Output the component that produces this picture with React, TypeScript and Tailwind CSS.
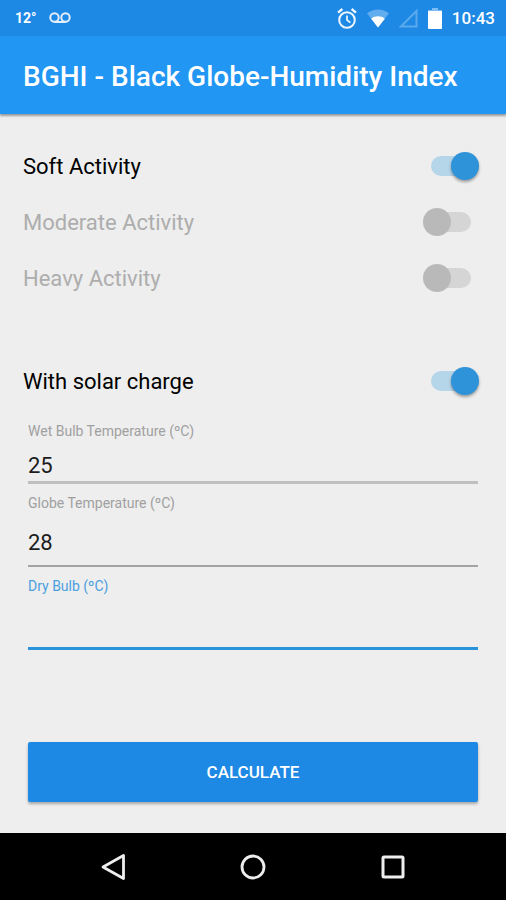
import { useState } from "react";

interface SwitchRowProps {
  id: string;
  label: string;
  checked: boolean;
  onChange: (checked: boolean) => void;
}

function SwitchRow({ id, label, checked, onChange }: SwitchRowProps) {
  return (
    <div className="flex h-14 items-center justify-between pr-[27px] pl-[23px]">
      <label
        htmlFor={id}
        className={`pt-0.5 text-[22px] leading-7 ${checked ? "text-black" : "text-[#adadad]"}`}
      >
        {label}
      </label>
      <input
        id={id}
        type="checkbox"
        role="switch"
        checked={checked}
        onChange={(e) => onChange(e.target.checked)}
        className="relative flex h-7 w-14 shrink-0 cursor-pointer appearance-none items-center px-2 before:h-5 before:w-full before:rounded-full before:bg-[#d5d5d5] after:absolute after:top-0 after:left-0 after:size-7 after:rounded-full after:bg-[#b9b9b9] checked:before:bg-[#b5d5e9] checked:after:right-0 checked:after:left-auto checked:after:bg-[#2e93d9] checked:after:shadow-[0_2px_3px_rgba(0,0,0,0.35)]"
      />
    </div>
  );
}

interface FieldProps {
  id: string;
  label: string;
  value: string;
  onChange: (value: string) => void;
  labelClass: string;
  inputClass: string;
}

function Field({ id, label, value, onChange, labelClass, inputClass }: FieldProps) {
  return (
    <div className="flex flex-col">
      <label htmlFor={id} className={`text-sm leading-5 ${labelClass}`}>
        {label}
      </label>
      <input
        id={id}
        type="text"
        inputMode="decimal"
        value={value}
        onChange={(e) => onChange(e.target.value)}
        className={`w-full bg-transparent text-[22px] text-[#1c1c1c] outline-none ${inputClass}`}
      />
    </div>
  );
}

function StatusBar() {
  return (
    <div className="flex h-9 items-center justify-between bg-[#1e88e5] pr-[11px] pl-[15px] text-white">
      <div className="flex items-center gap-3">
        <span className="text-sm font-bold">12°</span>
        <svg width="22" height="12" viewBox="0 0 22 12" fill="none" stroke="#e3f0fc" strokeWidth="2">
          <circle cx="5.5" cy="5.5" r="4.2" />
          <circle cx="16.5" cy="5.5" r="4.2" />
          <path d="M5.5 10h11" />
        </svg>
      </div>
      <div className="flex items-center gap-[10px]">
        <svg width="20" height="21" viewBox="0 0 20 21" fill="none" stroke="#eef6fd" strokeWidth="2">
          <circle cx="10" cy="12" r="7.8" />
          <path d="M10 7.5V12l3.4 2.6" strokeWidth="1.7" />
          <path d="M1 4.6 5.4 1M19 4.6 14.6 1" strokeWidth="2.4" />
        </svg>
        <svg width="22" height="19" viewBox="0 0 22 19">
          <path d="M0 4.3C6.500-0.800 15.500-0.800 22 4.300L11 18.500Z" fill="#62adee" />
          <path d="M4.200 9.700C8 6.500 14 6.500 17.800 9.700L11 18.500Z" fill="#fff" />
        </svg>
        <svg width="19" height="20" viewBox="0 0 19 20" fill="none" stroke="#5ba9ed" strokeWidth="2">
          <path d="M17.500 3v15.500H2Z" />
        </svg>
        <svg width="14" height="21" viewBox="0 0 14 21">
          <path d="M4 0h6v2h4v2H0V2h4Z" fill="#7dbbf1" />
          <rect y="3" width="14" height="18" rx="1" fill="#fff" />
        </svg>
        <span className="text-[17px] leading-6 font-medium">10:43</span>
      </div>
    </div>
  );
}

function NavBar() {
  return (
    <nav className="flex h-[67px] items-center justify-center bg-black">
      <button type="button" aria-label="Back" className="flex w-[140px] justify-center">
        <svg width="26" height="28" viewBox="0 0 26 28" fill="none" stroke="#eee" strokeWidth="2.8">
          <path d="M23.500 2.500v23L3 14Z" strokeLinejoin="round" />
        </svg>
      </button>
      <button type="button" aria-label="Home" className="flex w-[140px] justify-center">
        <svg width="26" height="26" viewBox="0 0 26 26" fill="none" stroke="#eee" strokeWidth="2.8">
          <circle cx="13" cy="13" r="11" />
        </svg>
      </button>
      <button type="button" aria-label="Recent apps" className="flex w-[140px] justify-center">
        <svg width="24" height="24" viewBox="0 0 24 24" fill="none" stroke="#eee" strokeWidth="3">
          <rect x="2" y="2" width="20" height="20" rx="1" />
        </svg>
      </button>
    </nav>
  );
}

type Activity = "soft" | "moderate" | "heavy";

const ACTIVITIES: { id: Activity; label: string }[] = [
  { id: "soft", label: "Soft Activity" },
  { id: "moderate", label: "Moderate Activity" },
  { id: "heavy", label: "Heavy Activity" },
];

export default function App() {
  const [activity, setActivity] = useState<Activity>("soft");
  const [solar, setSolar] = useState(true);
  const [wetBulb, setWetBulb] = useState("25");
  const [globe, setGlobe] = useState("28");
  const [dryBulb, setDryBulb] = useState("");

  return (
    <div className="flex min-h-screen flex-col bg-[#eeeeee] font-[Roboto,sans-serif]">
      <StatusBar />
      <header className="flex h-[78px] items-center bg-[#2196f3] px-[23px] pt-1 shadow-[0_2px_2px_rgba(0,0,0,0.35)]">
        <h1 className="text-[28px] leading-8 font-medium text-white">
          BGHI - Black Globe-Humidity Index
        </h1>
      </header>

      <main className="flex flex-1 flex-col pt-6">
        {ACTIVITIES.map((item) => (
          <SwitchRow
            key={item.id}
            id={item.id}
            label={item.label}
            checked={activity === item.id}
            onChange={() => setActivity(item.id)}
          />
        ))}

        <div className="mt-[47px]">
          <SwitchRow id="solar" label="With solar charge" checked={solar} onChange={setSolar} />
        </div>

        <form
          className="flex flex-1 flex-col px-7 pt-3 pb-[31px]"
          onSubmit={(e) => e.preventDefault()}
        >
          <div className="flex flex-col gap-[9px]">
            <Field
              id="wet-bulb"
              label="Wet Bulb Temperature (ºC)"
              value={wetBulb}
              onChange={setWetBulb}
              labelClass="text-[#a0a0a0]"
              inputClass="h-[43px] border-b-3 border-[#bfbfbf] pt-2"
            />
            <Field
              id="globe"
              label="Globe Temperature (ºC)"
              value={globe}
              onChange={setGlobe}
              labelClass="text-[#a0a0a0]"
              inputClass="h-[54px] border-b-2 border-[#a3a3a3] pt-1.5"
            />
            <Field
              id="dry-bulb"
              label="Dry Bulb (ºC)"
              value={dryBulb}
              onChange={setDryBulb}
              labelClass="text-[#4b9fdf]"
              inputClass="h-[54px] border-b-3 border-[#2b93db] pt-1.5"
            />
          </div>

          <button
            type="submit"
            className="mt-auto h-[60px] rounded-xs bg-[#1e88e5] pt-0.5 text-[17px] font-medium text-white shadow-[0_2px_3px_rgba(0,0,0,0.3)]"
          >
            CALCULATE
          </button>
        </form>
      </main>

      <NavBar />
    </div>
  );
}
